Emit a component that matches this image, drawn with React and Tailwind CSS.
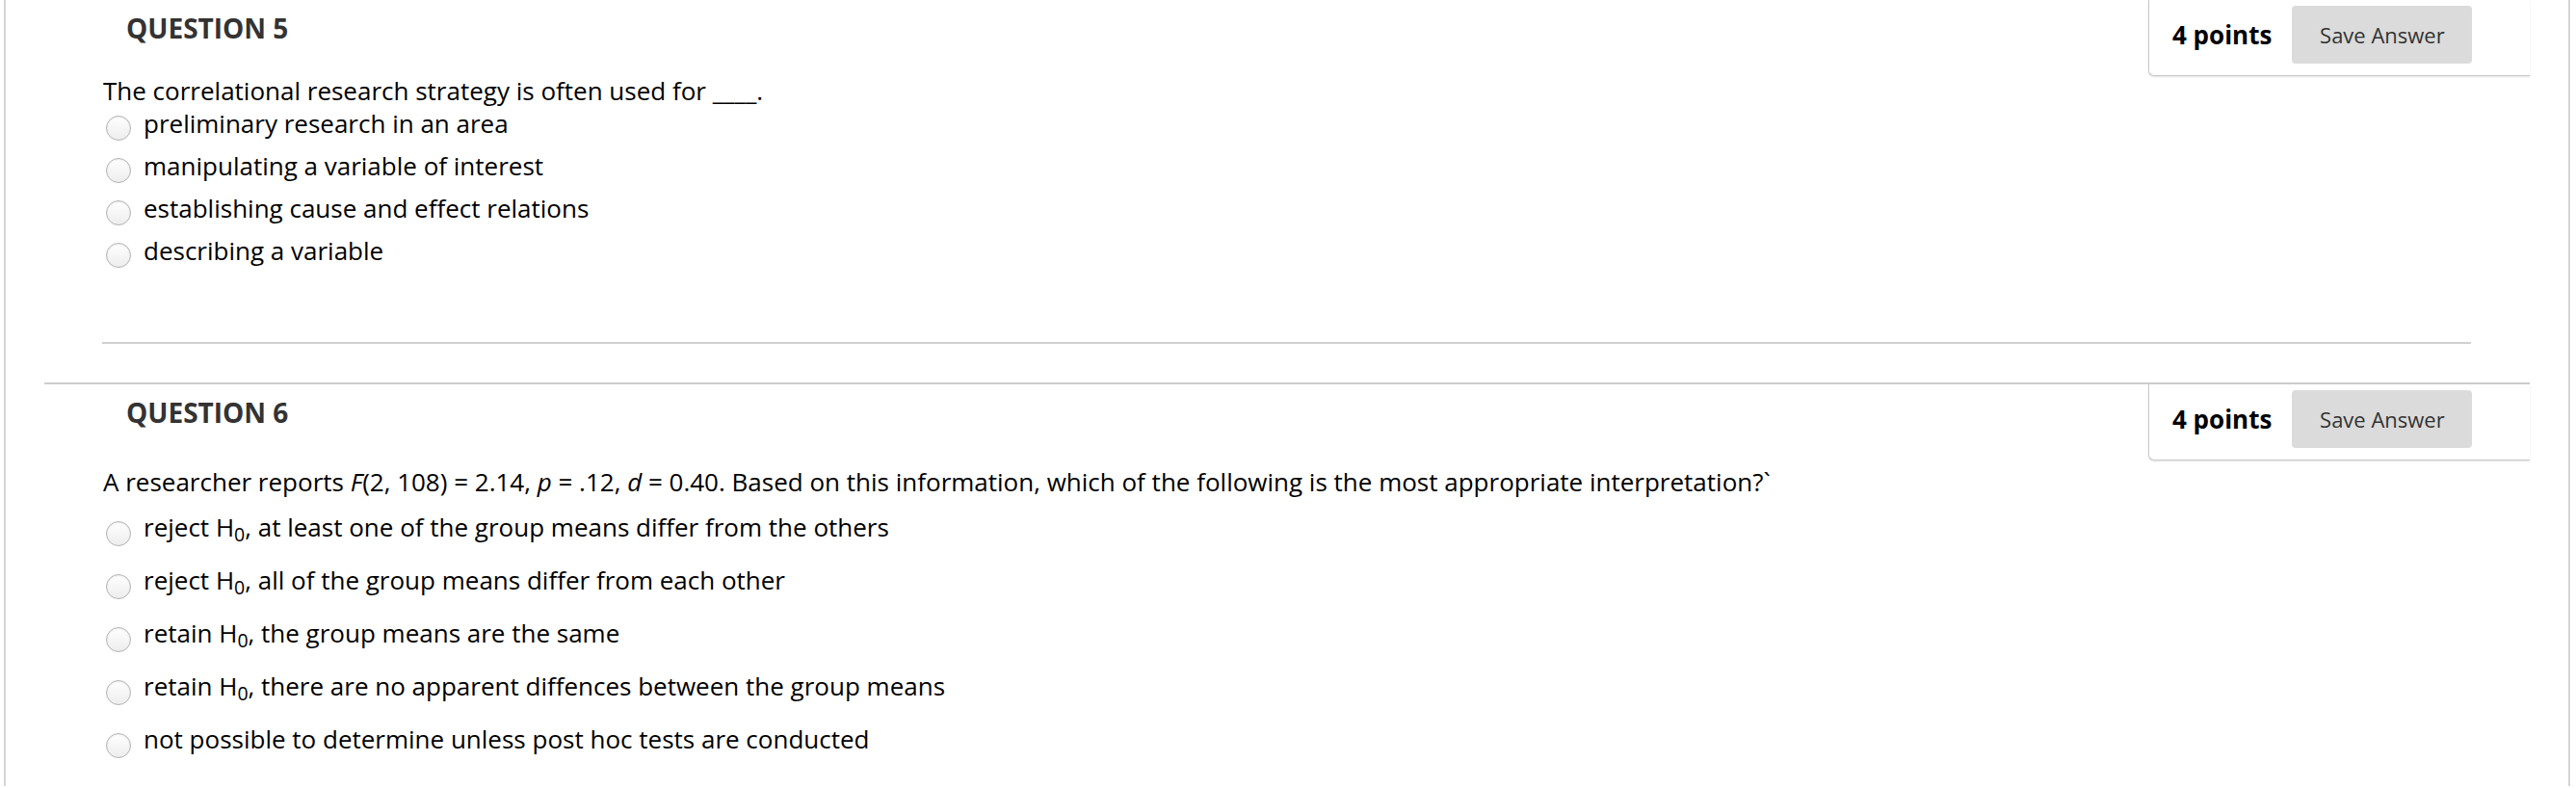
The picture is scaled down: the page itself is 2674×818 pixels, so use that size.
import React from "react";

const q5Options = [
  "preliminary research in an area",
  "manipulating a variable of interest",
  "establishing cause and effect relations",
  "describing a variable",
];

const q6Options = [
  { pre: "reject", post: ", at least one of the group means differ from the others" },
  { pre: "reject", post: ", all of the group means differ from each other" },
  { pre: "retain", post: ", the group means are the same" },
  { pre: "retain", post: ", there are no apparent diffences between the group means" },
  { text: "not possible to determine unless post hoc tests are conducted" },
];

function Radio({ className = "" }) {
  return (
    <span
      className={
        "block w-[26px] h-[26px] shrink-0 rounded-full border border-[#b3b3b3] bg-linear-to-b from-white to-[#ededed] shadow-[inset_0_1px_2px_rgba(0,0,0,0.08)] " +
        className
      }
    />
  );
}

function PointsPanel() {
  return (
    <div className="flex items-center gap-[21px] w-[396px] h-[79px] pl-[24px] pt-[6px] pb-[12px] border-l border-b border-[#c9c9c9] rounded-bl-[6px] shadow-[0_1px_2px_rgba(0,0,0,0.12)] bg-white self-start">
      <span className="text-[26px] leading-[36px] font-bold text-black">4 points</span>
      <button className="w-[187px] h-[60px] rounded-[4px] bg-[#dbdbdb] text-[22px] text-[#333] leading-none">
        Save Answer
      </button>
    </div>
  );
}

export default function App() {
  return (
    <div className="font-['Open_Sans',sans-serif] bg-white w-[2674px] h-[818px] overflow-hidden">
      <div className="ml-[4px] w-[2664px] h-[818px] border-x-2 border-[#d6d6d6]">
        <ul className="ml-[40px] w-[2580px] -mt-[2px]">
          {/* Question 5 */}
          <li className="border-t-2 border-[#cccccc]">
            <div className="flex justify-between h-[77px]">
              <h3 className="pl-[85px] pt-[10px] text-[28px] leading-[38px] font-bold text-[#333]">
                QUESTION 5
              </h3>
              <PointsPanel />
            </div>
            <div className="pl-[61px]">
              <p className="text-[26px] leading-[34px] text-black">
                The correlational research strategy is often used for ____.
              </p>
              <ul>
                {q5Options.map((o) => (
                  <li key={o} className="flex items-start h-[34px] mb-[10px] pl-[3px]">
                    <Radio className="mt-[9px]" />
                    <span className="ml-[13px] text-[26px] leading-[34px] text-black">{o}</span>
                  </li>
                ))}
              </ul>
              <div className="mt-[78px] -ml-[1px] w-[2459px] border-t-2 border-[#d0d0d0]" />
            </div>
          </li>

          {/* Question 6 */}
          <li className="mt-[40px] border-t-2 border-[#cccccc]">
            <div className="flex justify-between h-[84px]">
              <h3 className="pl-[85px] pt-[10px] text-[28px] leading-[38px] font-bold text-[#333]">
                QUESTION 6
              </h3>
              <PointsPanel />
            </div>
            <div className="pl-[61px]">
              <p className="text-[26px] leading-[34px] text-black">
                A researcher reports <i>F</i>(2, 108) = 2.14, <i>p</i> = .12, <i>d</i> = 0.40. Based on this
                information, which of the following is the most appropriate interpretation?`
              </p>
              <ul className="mt-[13px]">
                {q6Options.map((o, i) => (
                  <li key={i} className="flex items-start h-[34px] mb-[21px] pl-[3px]">
                    <Radio className="mt-[11px]" />
                    <span className="ml-[13px] text-[26px] leading-[34px] text-black whitespace-nowrap">
                      {o.text ? (
                        o.text
                      ) : (
                        <>
                          {o.pre} H<sub>0</sub>
                          {o.post}
                        </>
                      )}
                    </span>
                  </li>
                ))}
              </ul>
            </div>
          </li>
        </ul>
      </div>
    </div>
  );
}
